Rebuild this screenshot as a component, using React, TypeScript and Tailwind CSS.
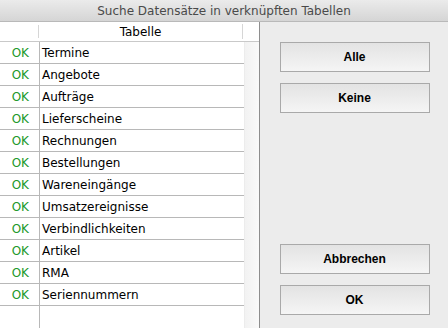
const rows = [
  "Termine",
  "Angebote",
  "Aufträge",
  "Lieferscheine",
  "Rechnungen",
  "Bestellungen",
  "Wareneingänge",
  "Umsatzereignisse",
  "Verbindlichkeiten",
  "Artikel",
  "RMA",
  "Seriennummern",
];

function DialogButton({ label }: { label: string }) {
  return (
    <button className="h-[30px] w-[150px] border-[1.5px] border-[#a9a9a9] bg-gradient-to-b from-[#e3e3e3] to-[#f5f5f5] font-['Liberation_Sans',Arial,sans-serif] text-[12px] font-bold text-black">
      {label}
    </button>
  );
}

export default function App() {
  return (
    <div className="flex h-[328px] w-[448px] flex-col overflow-hidden bg-[#ececec] font-['DejaVu_Sans',sans-serif]">
      <div className="flex h-[22px] items-center justify-center border-b border-[#b9b9b9] bg-gradient-to-b from-[#ebebeb] to-[#d5d5d5] text-[12px] text-[#4a4a4a]">
        Suche Datensätze in verknüpften Tabellen
      </div>

      <div className="flex flex-1">
        <div className="flex w-[260px] flex-col border-r border-[#8e8e8e] bg-white">
          <div className="flex h-[20px] border-b border-[#c9c9c9] text-[12px] text-black">
            <div className="my-[3px] w-[39px] border-r border-[#d6d6d6]" />
            <div className="my-[2px] flex w-[204px] items-center justify-center border-r border-[#d6d6d6]">
              Tabelle
            </div>
            <div className="flex-1" />
          </div>
          <div className="flex flex-1">
            <div className="flex w-[244px] flex-col">
              {rows.map((name) => (
                <div key={name} className="flex h-[22px] border-b border-[#b8b8b8] text-[12px]">
                  <div className="flex w-[40px] items-center justify-end border-r border-[#b8b8b8] pr-[10px] text-[#22982a]">
                    OK
                  </div>
                  <div className="flex items-center pl-[2px] text-black">{name}</div>
                </div>
              ))}
              <div className="flex flex-1">
                <div className="w-[40px] border-r border-[#b8b8b8]" />
              </div>
            </div>
            <div className="flex-1 border-l border-[#ececec] bg-gradient-to-r from-[#f2f2f2] to-[#fafafa]" />
          </div>
        </div>

        <div className="flex flex-1 flex-col items-center pb-[13px] pl-[1px] pt-[20px]">
          <div className="flex flex-col gap-[11px]">
            <DialogButton label="Alle" />
            <DialogButton label="Keine" />
          </div>
          <div className="flex-1" />
          <div className="flex flex-col gap-[11px]">
            <DialogButton label="Abbrechen" />
            <DialogButton label="OK" />
          </div>
        </div>
      </div>
    </div>
  );
}
